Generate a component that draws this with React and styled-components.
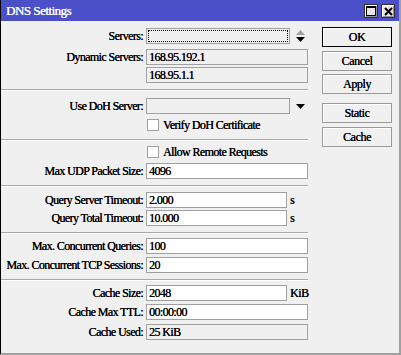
import React from "react";
import styled, { createGlobalStyle } from "styled-components";

const GlobalStyle = createGlobalStyle`
  html, body { margin: 0; padding: 0; background: #f0f0f0; }
  body { font-family: "Liberation Serif", "Times New Roman", serif; font-size: 12px; color: #000; }
  * { box-sizing: border-box; }
`;

const Window = styled.div`
  width: 401px;
  height: 355px;
  display: flex;
  flex-direction: column;
  background: #f0f0f0;
  border-left: 1px solid #000;
  border-right: 2px solid #a0a0a0;
  border-bottom: 2px solid #a0a0a0;
`;

const TitleBar = styled.div`
  height: 21px;
  flex-shrink: 0;
  background: #4b4fc8;
  color: #fff;
  display: flex;
  align-items: center;
  justify-content: space-between;
  padding: 0 4px 0 5px;
`;

const TitleText = styled.span`
  font-size: 13px;
  letter-spacing: -0.5px;
  text-shadow: 0.2px 0 0 #fff;
`;

const TitleButtons = styled.div`
  display: flex;
  gap: 3px;
  margin-top: 1px;
`;

const TitleButton = styled.div`
  width: 14px;
  height: 14px;
  background: #e6e6e6;
  border: 1px solid #303030;
  box-shadow: inset 1px 1px 0 #fff, inset -1px -1px 0 #909090;
  display: flex;
  align-items: center;
  justify-content: center;
`;

const Body = styled.div`
  flex: 1;
  display: flex;
`;

const Form = styled.div`
  width: 307px;
  padding-top: 7px;
  display: flex;
  flex-direction: column;
`;

const Row = styled.div`
  display: flex;
  align-items: center;
  height: 16px;
  margin-top: ${(p) => p.$mt || 0}px;
`;

const Label = styled.div`
  width: 142px;
  margin-right: 3px;
  flex-shrink: 0;
  text-align: right;
  white-space: nowrap;
  letter-spacing: -0.6px;
  text-shadow: 0.15px 0 0 #000;
`;

const Box = styled.div`
  position: relative;
  width: ${(p) => p.$w}px;
  height: 16px;
  flex-shrink: 0;
  border: 1px solid #a0a0a0;
  background: ${(p) => (p.$ro ? "#f0f0f0" : "#fff")};
  padding: 0 2px;
  line-height: 14px;
  white-space: nowrap;
  letter-spacing: -0.6px;
  text-shadow: 0.15px 0 0 #000;
`;

const FocusRing = styled.div`
  position: absolute;
  inset: 1px;
  border: 1px dotted #000;
`;

const Suffix = styled.span`
  margin-left: 3px;
  letter-spacing: -0.5px;
  text-shadow: 0.15px 0 0 #000;
`;

const IconSlot = styled.div`
  margin-left: 5px;
  width: 10px;
  display: flex;
  justify-content: center;
`;

const CheckRow = styled(Row)`
  padding-left: 146px;
`;

const Check = styled.div`
  width: 12px;
  height: 12px;
  border: 1px solid #a0a0a0;
  background: #fff;
  margin-right: 4px;
`;

const CheckLabel = styled.span`
  letter-spacing: -0.6px;
  text-shadow: 0.15px 0 0 #000;
`;

const Separator = styled.div`
  width: 307px;
  height: 2px;
  border-top: 1px solid #a8a8a8;
  border-bottom: 1px solid #fff;
  margin-top: ${(p) => p.$mt || 0}px;
`;

const Buttons = styled.div`
  margin-left: 14px;
  padding-top: 6px;
  display: flex;
  flex-direction: column;
`;

const Button = styled.div`
  width: 70px;
  height: 20px;
  margin-top: ${(p) => p.$mt || 0}px;
  border: 1px solid ${(p) => (p.$default ? "#000" : "#9a9a9a")};
  box-shadow: inset 1px 1px 0 #fff;
  background: #f0f0f0;
  display: flex;
  align-items: center;
  justify-content: center;
  letter-spacing: -0.4px;
  text-shadow: 0.15px 0 0 #000;
`;

const Spinner = () => (
  <svg width="9" height="12" viewBox="0 0 9 12">
    <polygon points="0,5 9,5 4.5,0" fill="#a0a0a0" />
    <polygon points="0,7 9,7 4.5,12" fill="#000" />
  </svg>
);

const DropArrow = () => (
  <svg width="9" height="5" viewBox="0 0 9 5">
    <polygon points="0,0 9,0 4.5,5" fill="#000" />
  </svg>
);

const MaxIcon = () => (
  <svg width="10" height="10" viewBox="0 0 10 10">
    <rect x="0.5" y="0.5" width="9" height="9" fill="none" stroke="#000" />
    <rect x="0" y="0" width="10" height="2" fill="#000" />
  </svg>
);

const CloseIcon = () => (
  <svg width="9" height="9" viewBox="0 0 9 9">
    <path d="M1 1 L8 8 M8 1 L1 8" stroke="#000" strokeWidth="2" />
  </svg>
);

const Field = ({ label, value, w = 162, ro, mt, suffix, icon, focus }) => (
  <Row $mt={mt}>
    <Label>{label}</Label>
    <Box $w={w} $ro={ro}>
      {value}
      {focus && <FocusRing />}
    </Box>
    {suffix && <Suffix>{suffix}</Suffix>}
    {icon && <IconSlot>{icon}</IconSlot>}
  </Row>
);

export default function App() {
  return (
    <>
      <GlobalStyle />
      <Window>
        <TitleBar>
          <TitleText>DNS Settings</TitleText>
          <TitleButtons>
            <TitleButton>
              <MaxIcon />
            </TitleButton>
            <TitleButton>
              <CloseIcon />
            </TitleButton>
          </TitleButtons>
        </TitleBar>
        <Body>
          <Form>
            <Field label="Servers:" value="" w={144} ro focus icon={<Spinner />} />
            <Field label="Dynamic Servers:" value="168.95.192.1" ro mt={5} />
            <Field label="" value="168.95.1.1" ro mt={2} />
            <Separator $mt={6} />
            <Field label="Use DoH Server:" value="" w={144} ro mt={7} icon={<DropArrow />} />
            <CheckRow $mt={3}>
              <Check />
              <CheckLabel>Verify DoH Certificate</CheckLabel>
            </CheckRow>
            <Separator $mt={6} />
            <CheckRow $mt={3}>
              <Check />
              <CheckLabel>Allow Remote Requests</CheckLabel>
            </CheckRow>
            <Field label="Max UDP Packet Size:" value="4096" mt={3} />
            <Separator $mt={6} />
            <Field label="Query Server Timeout:" value="2.000" w={141} suffix="s" mt={5} />
            <Field label="Query Total Timeout:" value="10.000" w={141} suffix="s" mt={2} />
            <Separator $mt={6} />
            <Field label="Max. Concurrent Queries:" value="100" mt={4} />
            <Field label="Max. Concurrent TCP Sessions:" value="20" mt={3} />
            <Separator $mt={6} />
            <Field label="Cache Size:" value="2048" w={141} suffix="KiB" mt={4} />
            <Field label="Cache Max TTL:" value="00:00:00" mt={3} />
            <Field label="Cache Used:" value="25 KiB" ro mt={4} />
          </Form>
          <Buttons>
            <Button $default>OK</Button>
            <Button $mt={4}>Cancel</Button>
            <Button $mt={3}>Apply</Button>
            <Button $mt={9}>Static</Button>
            <Button $mt={4}>Cache</Button>
          </Buttons>
        </Body>
      </Window>
    </>
  );
}
